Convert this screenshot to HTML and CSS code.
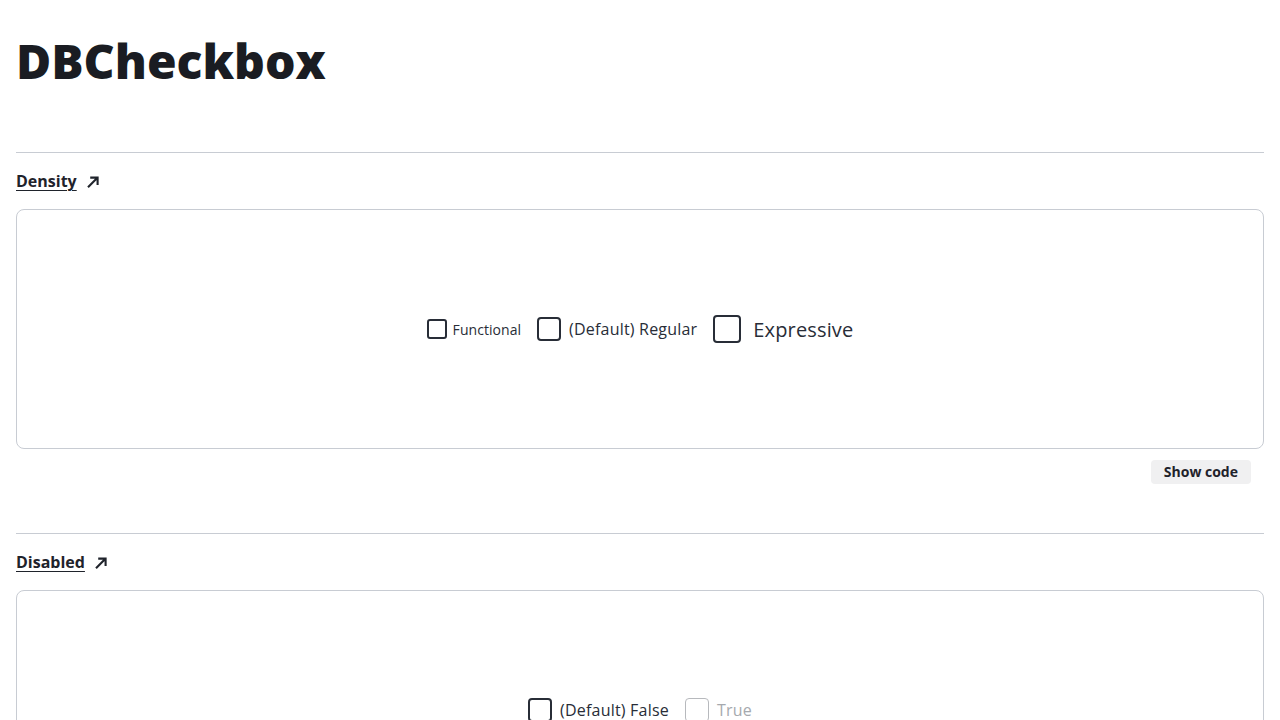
FILE: index.html
```html
<!DOCTYPE html>
<html lang="en">
<head>
<meta charset="utf-8">
<title>DBCheckbox</title>
<link rel="stylesheet" href="styles.css">
</head>
<body>
<main class="page">
  <h1 class="title">DBCheckbox</h1>

  <section class="example">
    <hr class="divider">
    <a class="example-link" href="#density">Density<svg class="arrow" viewBox="0 0 14 14" width="14" height="14" aria-hidden="true"><path d="M2 12.2 L11.4 2.8 M4.2 2.6 H11.6 V10" fill="none" stroke="currentColor" stroke-width="2.1" stroke-linecap="butt" stroke-linejoin="miter"/></svg></a>
    <div class="card">
      <div class="row">
        <label class="check check-functional"><span class="box"></span><span class="label">Functional</span></label>
        <label class="check check-regular"><span class="box"></span><span class="label">(Default) Regular</span></label>
        <label class="check check-expressive"><span class="box"></span><span class="label">Expressive</span></label>
      </div>
    </div>
    <div class="actions"><button class="show-code" type="button">Show code</button></div>
  </section>

  <section class="example">
    <hr class="divider">
    <a class="example-link" href="#disabled">Disabled<svg class="arrow" viewBox="0 0 14 14" width="14" height="14" aria-hidden="true"><path d="M2 12.2 L11.4 2.8 M4.2 2.6 H11.6 V10" fill="none" stroke="currentColor" stroke-width="2.1" stroke-linecap="butt" stroke-linejoin="miter"/></svg></a>
    <div class="card">
      <div class="row">
        <label class="check check-regular"><span class="box"></span><span class="label">(Default) False</span></label>
        <label class="check check-regular is-disabled"><span class="box"></span><span class="label">True</span></label>
      </div>
    </div>
    <div class="actions"><button class="show-code" type="button">Show code</button></div>
  </section>
</main>
</body>
</html>
```

FILE: styles.css
```css
* { box-sizing: border-box; }

html, body {
  margin: 0;
  padding: 0;
  background: #ffffff;
  color: #282d37;
  font-family: "Open Sans", "Noto Sans", sans-serif;
}

.page {
  padding: 0 16px;
}

.title {
  margin: 0;
  padding-top: 29px;
  font-size: 48px;
  line-height: 64px;
  font-weight: 800;
  color: #1a1c22;
}

.example {
  display: flex;
  flex-direction: column;
}

.divider {
  margin: 59px 0 0;
  border: 0;
  border-top: 1px solid #c8ccd3;
  height: 0;
}

.example + .example .divider {
  margin-top: 49px;
}

.example-link {
  align-self: flex-start;
  display: inline-flex;
  align-items: center;
  gap: 9px;
  margin-top: 16px;
  font-size: 16px;
  line-height: 24px;
  font-weight: 700;
  color: #1f232b;
  text-decoration: underline;
  text-underline-offset: 3px;
  text-decoration-thickness: 1px;
}

.arrow {
  width: 14px;
  height: 14px;
  margin-top: 1px;
}

.card {
  margin-top: 16px;
  height: 240px;
  border: 1px solid #c8ccd3;
  border-radius: 8px;
  display: flex;
  align-items: center;
  justify-content: center;
}

.row {
  display: flex;
  align-items: center;
  gap: 16px;
}

.check {
  display: inline-flex;
  align-items: center;
  color: #282d37;
}

.box {
  display: inline-block;
  flex: none;
  border: 2px solid #282d37;
  border-radius: 3px;
  background: #fff;
}

.check-functional { gap: 6px; font-size: 14px; }
.check-functional .box { width: 20px; height: 20px; }
.check-functional .label { letter-spacing: 0.05px; }

.check-regular { gap: 8px; font-size: 16px; }
.check-regular .box { width: 24px; height: 24px; border-radius: 4px; }
.check-regular .label { letter-spacing: 0.2px; }

.check-expressive { gap: 12px; font-size: 20px; }
.check-expressive .box { width: 28px; height: 28px; border-radius: 4px; }
.check-expressive .label { letter-spacing: 0.15px; }

.is-disabled { color: #a6a9ae; }
.is-disabled .box { border-color: #b7b9bd; border-width: 1.5px; }

.actions {
  display: flex;
  justify-content: flex-end;
  padding: 11px 13px 0;
}

.show-code {
  font-family: inherit;
  font-size: 14px;
  font-weight: 700;
  line-height: 20px;
  color: #1f232b;
  background: #f0f0f1;
  border: 0;
  border-radius: 4px;
  padding: 2px 13px;
  height: 24px;
}
```
